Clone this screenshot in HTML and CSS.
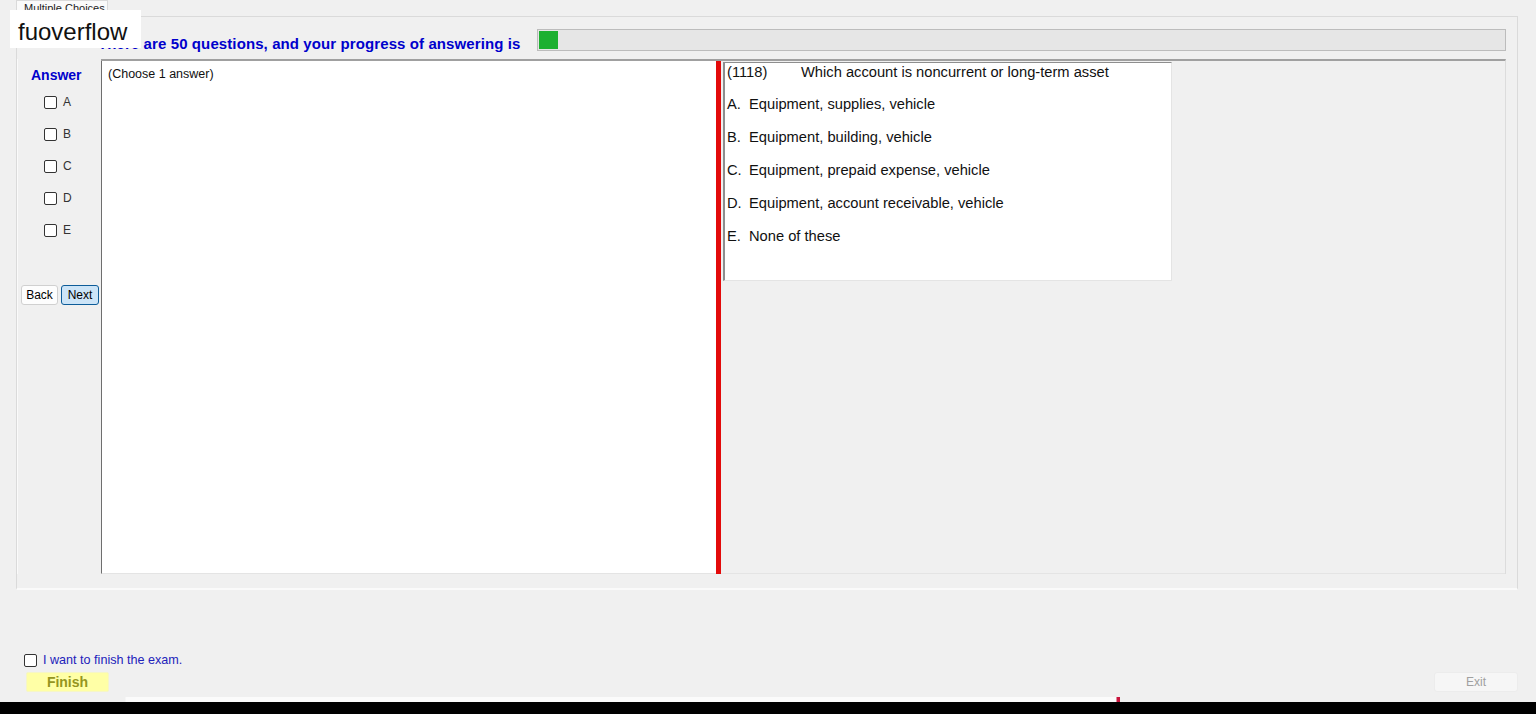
FILE: index.html
```html
<!DOCTYPE html>
<html lang="en">
<head>
  <meta charset="UTF-8">
  <title>Multiple Choices</title>
  <link rel="stylesheet" href="styles.css">
</head>
<body>
  <div class="watermark">fuoverflow</div>

  <div class="tabs">
    <div class="tab">Multiple Choices</div>
  </div>

  <div class="tab-page">
    <div class="header">
      <span class="progress-text">There are 50 questions, and your progress of answering is</span>
      <div class="progress"><div class="progress-fill" style="width: 19px"></div></div>
    </div>

    <div class="content">
      <div class="answer-col">
        <div class="answer-title">Answer</div>
        <label class="opt"><input type="checkbox"> A</label>
        <label class="opt"><input type="checkbox"> B</label>
        <label class="opt"><input type="checkbox"> C</label>
        <label class="opt"><input type="checkbox"> D</label>
        <label class="opt"><input type="checkbox"> E</label>
        <div class="nav">
          <button class="btn">Back</button>
          <button class="btn btn-next">Next</button>
        </div>
      </div>

      <div class="frame">
        <div class="pane-left">(Choose 1 answer)</div>
        <div class="splitter"></div>
        <div class="pane-right">
          <div class="question">
            <div class="q-title"><span class="q-num">(1118)</span>Which account is noncurrent or long-term asset</div>
            <div class="q-opt"><span class="q-letter">A.</span>Equipment, supplies, vehicle</div>
            <div class="q-opt"><span class="q-letter">B.</span>Equipment, building, vehicle</div>
            <div class="q-opt"><span class="q-letter">C.</span>Equipment, prepaid expense, vehicle</div>
            <div class="q-opt"><span class="q-letter">D.</span>Equipment, account receivable, vehicle</div>
            <div class="q-opt"><span class="q-letter">E.</span>None of these</div>
          </div>
        </div>
      </div>
    </div>
  </div>

  <div class="bottom">
    <div class="finish-area">
      <label class="finish-check"><input type="checkbox"> I want to finish the exam.</label>
      <button class="btn-finish">Finish</button>
    </div>
    <button class="btn-exit">Exit</button>
  </div>

  <div class="taskbar">
    <div class="taskbar-line"></div>
    <div class="taskbar-black"></div>
  </div>
</body>
</html>
```

FILE: styles.css
```css
body {
  font-family: 'Liberation Sans', Arial, sans-serif;
  background-color: #f0f0f0;
  margin: 0;
  padding: 0;
  width: 1536px;
  height: 714px;
  overflow: hidden;
  position: relative;
  color: #000;
}

.watermark {
  position: absolute;
  left: 10px;
  top: 10px;
  width: 131px;
  height: 38px;
  background-color: #fff;
  font-size: 24px;
  line-height: 44px;
  padding-left: 8px;
  box-sizing: border-box;
  color: #111;
  z-index: 5;
}

.tabs {
  height: 16px;
  display: flex;
  padding-left: 16px;
}

.tab {
  font-size: 11px;
  line-height: 15px;
  padding: 0 7px;
  width: 92px;
  box-sizing: border-box;
  background-color: #fafafa;
  border: 1px solid #dadada;
  border-bottom: none;
  color: #222;
  white-space: nowrap;
  overflow: hidden;
}

.tab-page {
  margin: 0 18px 0 16px;
  height: 574px;
  box-sizing: border-box;
  border: 1px solid #dadada;
  border-bottom: 2px solid #fafafa;
  background-color: #f0f0f0;
}

.header {
  display: flex;
  align-items: center;
  padding: 12px 11px 0 81px;
  height: 22px;
}

.progress-text {
  color: #0000cc;
  font-weight: bold;
  font-size: 15px;
  letter-spacing: 0.1px;
  width: 439px;
  white-space: nowrap;
  padding-top: 6px;
}

.progress {
  flex: 1;
  height: 22px;
  box-sizing: border-box;
  border: 1px solid #bcbcbc;
  background-color: #e6e6e6;
  padding: 1px;
}

.progress-fill {
  height: 100%;
  background-color: #1cb030;
}

.content {
  display: flex;
  margin-top: 8px;
}

.answer-col {
  width: 84px;
  padding-left: 3px;
  box-sizing: border-box;
  display: flex;
  flex-direction: column;
  border-left: 1px solid #fafafa;
}

.answer-title {
  color: #0000cc;
  font-weight: bold;
  font-size: 14px;
  padding: 8px 0 0 10px;
  height: 19px;
}

.opt {
  display: flex;
  align-items: center;
  height: 32px;
  padding-left: 23px;
  font-size: 12px;
  color: #333;
  gap: 6px;
}

input[type="checkbox"] {
  appearance: none;
  -webkit-appearance: none;
  width: 13px;
  height: 13px;
  margin: 0;
  border: 1px solid #333;
  border-radius: 2px;
  background-color: #fff;
  box-sizing: border-box;
}

.nav {
  display: flex;
  gap: 3px;
  margin-top: 39px;
}

.btn {
  font-family: 'Liberation Sans', Arial, sans-serif;
  font-size: 12px;
  height: 20px;
  width: 37px;
  padding: 0;
  background-color: #fdfdfd;
  border: 1px solid #d0d0d0;
  border-radius: 3px;
  color: #000;
}

.btn-next {
  width: 38px;
  background-color: #cce4f7;
  border-color: #0d5c99;
}

.frame {
  flex: 1;
  height: 515px;
  display: flex;
  margin-right: 11px;
  border-top: 2px solid #a0a0a0;
  border-right: 1px solid #dcdcdc;
  box-sizing: border-box;
}

.pane-left {
  width: 615px;
  background-color: #fff;
  border-left: 1px solid #6e6e6e;
  border-bottom: 1px solid #e4e4e4;
  font-size: 12.5px;
  padding: 6px 0 0 6px;
  box-sizing: border-box;
  color: #111;
}

.splitter {
  width: 5px;
  background-color: #e30a0a;
}

.pane-right {
  flex: 1;
  padding: 1px 0 0 2px;
  border-bottom: 1px solid #e4e4e4;
}

.question {
  width: 449px;
  height: 219px;
  box-sizing: border-box;
  background-color: #fff;
  border-left: 2px solid #8e8e8e;
  border-top: 1px solid #8e8e8e;
  border-right: 1px solid #e4e4e4;
  border-bottom: 1px solid #e4e4e4;
  padding: 1px 0 0 2px;
  font-size: 14.7px;
  color: #111;
}

.q-title {
  height: 32px;
}

.q-num {
  display: inline-block;
  width: 74px;
}

.q-opt {
  height: 33px;
}

.q-letter {
  display: inline-block;
  width: 22px;
}

.bottom {
  display: flex;
  justify-content: space-between;
  align-items: flex-end;
  padding: 63px 18px 0 24px;
  height: 102px;
  box-sizing: border-box;
}

.finish-area {
  display: flex;
  flex-direction: column;
}

.finish-check {
  display: flex;
  align-items: center;
  gap: 6px;
  font-size: 12.6px;
  color: #2222bb;
}

.btn-finish {
  margin: 5px 0 0 2px;
  width: 83px;
  height: 20px;
  background-color: #ffffa6;
  border: 1px solid #f6f6c8;
  border-radius: 2px;
  color: #959520;
  font-family: 'Liberation Sans', Arial, sans-serif;
  font-weight: bold;
  font-size: 14px;
  padding: 0;
}

.btn-exit {
  width: 84px;
  height: 20px;
  background-color: #f6f6f6;
  border: 1px solid #ececec;
  border-radius: 3px;
  color: #a0a0a0;
  font-family: 'Liberation Sans', Arial, sans-serif;
  font-size: 12px;
  padding: 0;
}

.taskbar {
  margin-top: 5px;
}

.taskbar-line {
  height: 5px;
  width: 1120px;
  background: linear-gradient(to right, #f0f0f0 0, #f0f0f0 125px, #fbfbfb 126px, #fbfbfb 1116px, #c8143c 1117px);
}

.taskbar-black {
  height: 12px;
  background-color: #000;
}
```
